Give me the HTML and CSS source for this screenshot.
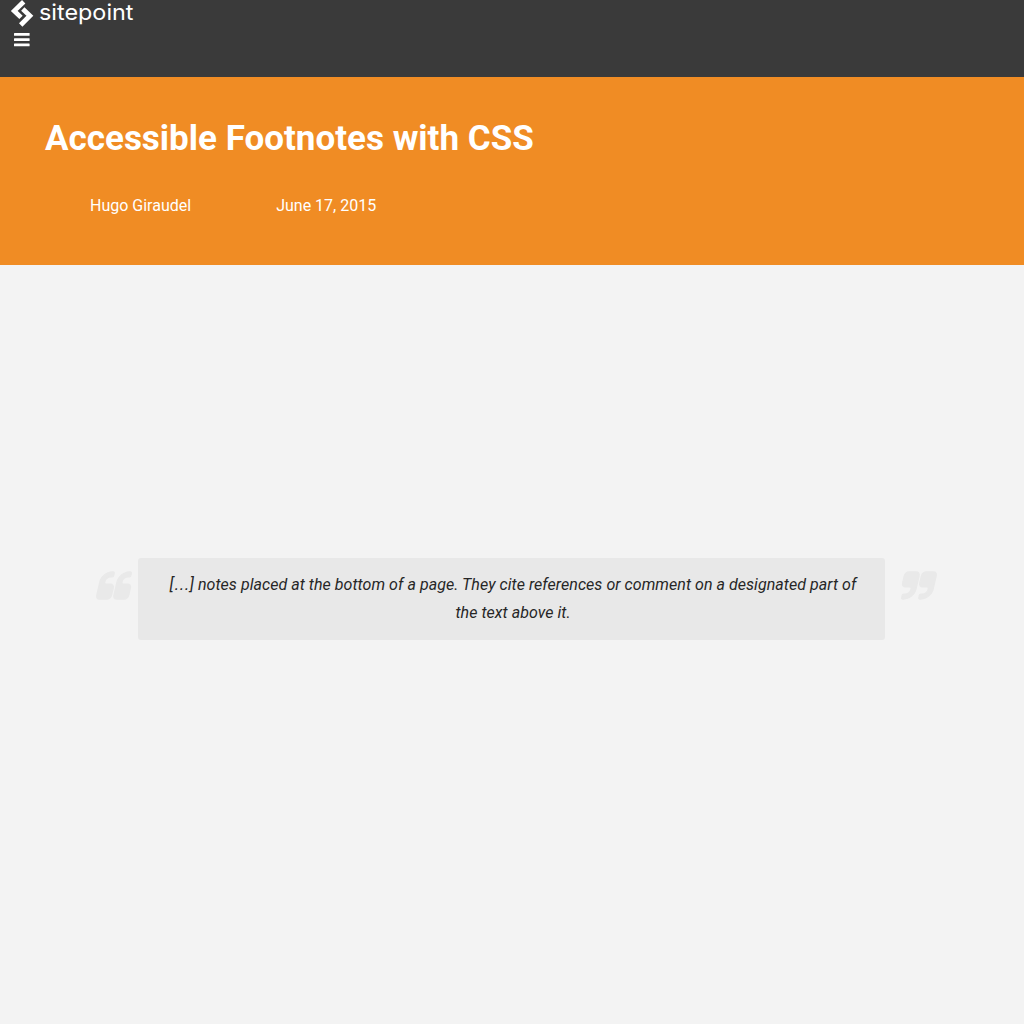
FILE: index.html
```html
<!DOCTYPE html>
<html lang="en">
<head>
<meta charset="utf-8">
<title>Accessible Footnotes with CSS</title>
<link rel="stylesheet" href="styles.css">
</head>
<body>
<header class="topbar">
  <a class="logo" aria-label="sitepoint">
    <svg class="logo-mark" width="24" height="28" viewBox="0 0 24 28" fill="none" stroke="#fff" stroke-width="4.8">
      <path d="M13.700 1.800 4.300 10.900 11 17.400"/>
      <path d="M12.800 9 19.900 15.800 10.700 25"/>
    </svg>
    <svg class="logo-name" width="104" height="33" viewBox="0 0 104 33"><text x="0" y="20" textLength="94.500" lengthAdjust="spacingAndGlyphs">sitepoint</text></svg>
  </a>
  <button class="menu" aria-label="Menu">
    <svg width="16" height="14" viewBox="0 0 16 14" fill="#fff"><rect y="0" width="15.600" height="2.700" rx=".5"/><rect y="5.300" width="15.600" height="2.700" rx=".5"/><rect y="10.500" width="15.600" height="2.700" rx=".5"/></svg>
  </button>
</header>
<section class="hero">
  <h1>Accessible Footnotes with CSS</h1>
  <div class="meta"><span class="author">Hugo Giraudel</span><time>June 17, 2015</time></div>
</section>
<main class="article">
  <svg class="quote" viewBox="0 128 1664 1408">
    <defs><path id="mark" d="M768 960v384q0 80-56 136t-136 56H192q-80 0-136-56T0 1344V640q0-104 40.500-198.500T150 278t163.500-109.500T512 128h64q26 0 45 19t19 45v128q0 26-19 45t-45 19h-64q-106 0-181 75t-75 181v32q0 40 28 68t68 28h224q80 0 136 56t56 136z"/></defs>
    <use href="#mark"/><use href="#mark" x="896"/>
  </svg>
  <blockquote>[<span class="ellipsis">…</span>] notes placed at the bottom of a page. They cite references or comment on a designated part of the text above it.</blockquote>
  <svg class="quote" viewBox="0 128 1664 1408">
    <g transform="rotate(180 832 832)"><use href="#mark"/><use href="#mark" x="896"/></g>
  </svg>
</main>
</body>
</html>
```
FILE: styles.css
```css
* { box-sizing: border-box; }
body {
  margin: 0;
  min-height: 1024px;
  background: #f3f3f3;
  color: #262626;
  font: 16px/28px Roboto, sans-serif;
}
.topbar {
  height: 77px;
  padding-left: 10px;
  background: #3a3a3a;
}
.logo { display: flex; height: 33px; }
.logo-mark { display: block; }
.logo-name { display: block; margin-left: 5px; }
.logo-name text {
  fill: #fff;
  font: 400 22px/28px Inter, sans-serif;
}
.menu {
  display: block;
  margin: 0 0 0 4px;
  padding: 0;
  border: 0;
  background: none;
}
.menu svg { display: block; }
.hero {
  height: 188px;
  padding: 38px 45px 0;
  background: #f08c24;
  color: #fff;
}
h1 {
  margin: 0;
  font-size: 35px;
  line-height: 48px;
  font-weight: 700;
}
.meta {
  display: flex;
  gap: 85px;
  padding: 29px 0 0 45px;
}
.article {
  display: flex;
  padding: 293px 0 0 99px;
}
.quote {
  flex: none;
  width: 32px;
  height: 27px;
  margin-top: 14px;
  overflow: visible;
  fill: #e9e9e9;
  stroke: #e9e9e9;
  stroke-width: 70;
  transform: skewX(-13deg);
}
blockquote {
  width: 747px;
  height: 82px;
  margin: 0 17px 0 7px;
  padding: 13px 24px 0 27px;
  border-radius: 3px;
  background: #e8e8e8;
  font-style: italic;
  letter-spacing: .05px;
  text-align: center;
}
.ellipsis {
  font-family: "Liberation Sans", sans-serif;
  line-height: 1;
}
```
